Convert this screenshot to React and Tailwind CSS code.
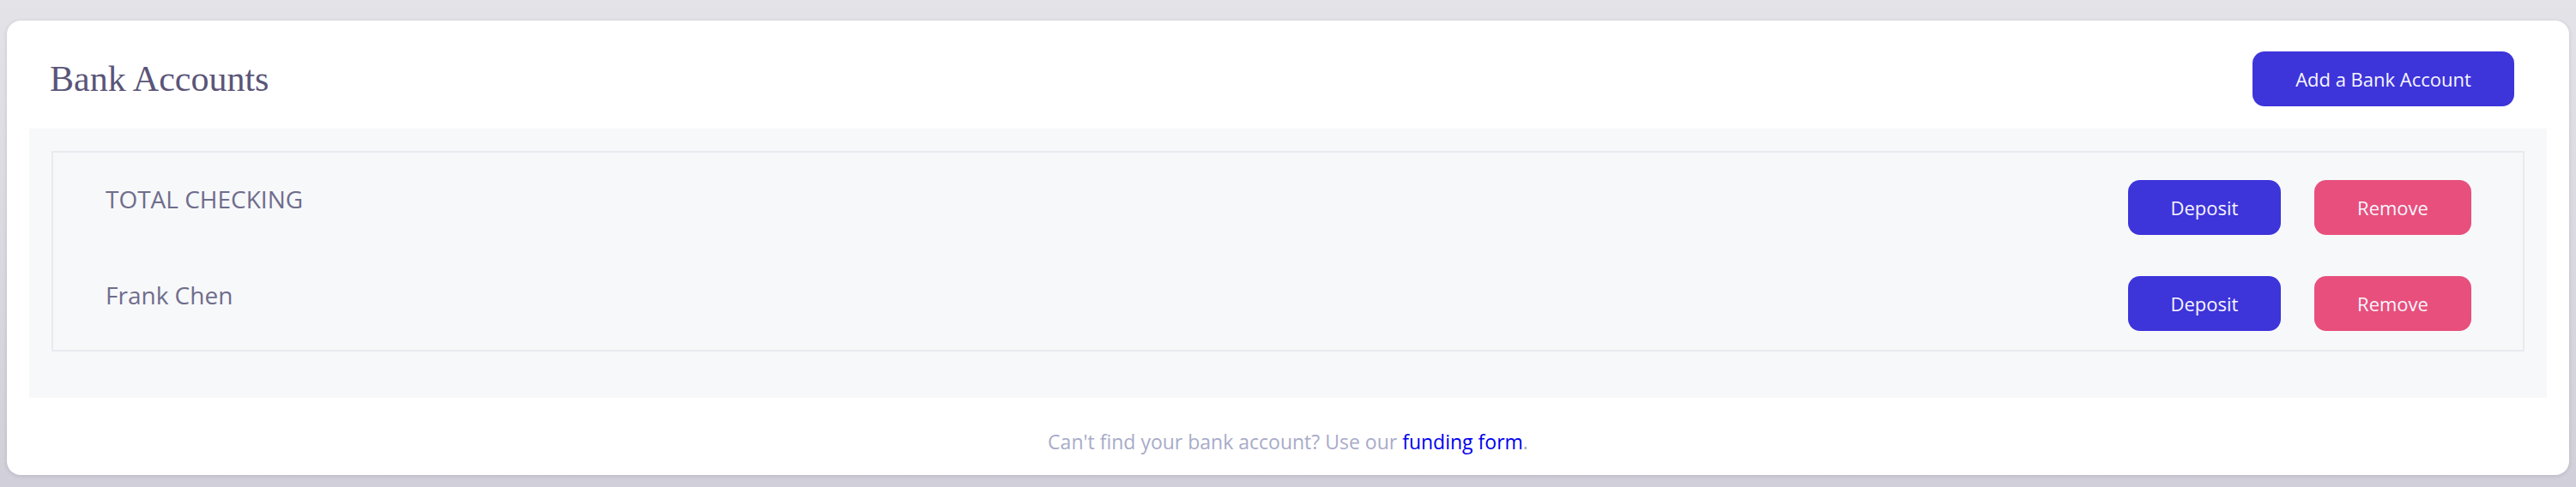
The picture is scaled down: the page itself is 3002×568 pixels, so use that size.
import React from "react";

const sans = { fontFamily: '"Open Sans", "Noto Sans", sans-serif' };

function Btn({ children, color, width }) {
  return (
    <button
      className={`flex h-[64px] items-center justify-center rounded-[14px] text-[22px] leading-none text-[#f7f6ff] ${color} ${width}`}
      style={sans}
    >
      {children}
    </button>
  );
}

function Row({ name }) {
  return (
    <div className="flex items-center justify-between pl-[61px] pr-[60px]">
      <span className="mb-[20px] text-[28px] leading-none text-[#6f6d8c]" style={sans}>
        {name}
      </span>
      <div className="flex items-center gap-[39px]">
        <Btn color="bg-[#3d34da]" width="w-[178px]">Deposit</Btn>
        <Btn color="bg-[#e84f7c]" width="w-[183px]">Remove</Btn>
      </div>
    </div>
  );
}

export default function App() {
  return (
    <div className="min-h-[568px] w-full bg-gradient-to-b from-[#e4e3e8] to-[#d1cfd9] px-2 pt-6 pb-[14px]">
      <div className="rounded-2xl bg-white shadow-[0_1px_5px_rgba(40,30,80,0.14)]">
        <div className="flex items-center justify-between pl-[50px] pr-[64px] pt-[36px] pb-[26px]">
          <h1
            className="text-[42px] leading-none text-[#5a5578]"
            style={{ fontFamily: '"Liberation Serif", serif' }}
          >
            Bank Accounts
          </h1>
          <Btn color="bg-[#3d34da]" width="w-[305px]">Add a Bank Account</Btn>
        </div>
        <div className="mx-[26px] bg-[#f7f8fa] px-[26px] pt-[26px] pb-[54px]">
          <div className="flex flex-col gap-[48px] border-2 border-[#e9eaf0] pt-[32px] pb-[22px]">
            <Row name="TOTAL CHECKING" />
            <Row name="Frank Chen" />
          </div>
        </div>
        <div
          className="flex h-[90px] items-center justify-center pt-[13px] text-[23px] leading-none text-[#a8abc8]"
          style={sans}
        >
          <span>
            Can't find your bank account? Use our{" "}
            <a href="#" className="text-[#0000ee]">funding form</a>.
          </span>
        </div>
      </div>
    </div>
  );
}
